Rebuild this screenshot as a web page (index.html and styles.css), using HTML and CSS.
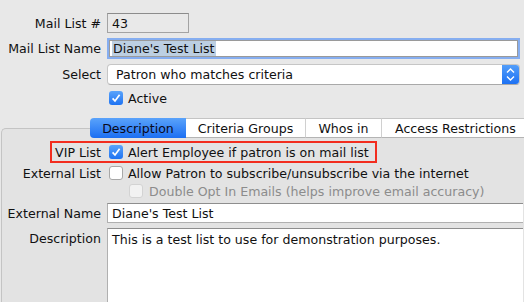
FILE: index.html
```html
<!DOCTYPE html>
<html lang="en">
<head>
    <meta charset="UTF-8">
    <meta name="viewport" content="width=device-width, initial-scale=1.0">
    <title>Mail List</title>
    <link rel="stylesheet" href="styles.css">
</head>
<body>
    <div class="form">
        <div class="row row-num">
            <span class="label">Mail List #</span>
            <div class="field field-ro">43</div>
        </div>
        <div class="row row-name">
            <span class="label">Mail List Name</span>
            <div class="field field-focus"><span class="selected">Diane's Test List</span></div>
        </div>
        <div class="row row-select">
            <span class="label">Select</span>
            <div class="select">
                <span class="select-text">Patron who matches criteria</span>
                <span class="stepper">
                    <svg width="17" height="21" viewBox="0 0 17 21">
                        <path d="M5 8.5 L8.5 5 L12 8.5" fill="none" stroke="#fff" stroke-width="1.4"/>
                        <path d="M5 12.5 L8.5 16 L12 12.5" fill="none" stroke="#fff" stroke-width="1.4"/>
                    </svg>
                </span>
            </div>
        </div>
        <div class="row row-active">
            <span class="label"></span>
            <span class="check checked">
                <svg width="14" height="14" viewBox="0 0 14 14"><path d="M3.6 7.4 L6 10 L10.6 3.8" fill="none" stroke="#fff" stroke-width="1.7"/></svg>
            </span>
            <span class="check-text">Active</span>
        </div>
    </div>

    <div class="tabs">
        <div class="tab tab-active">Description</div>
        <div class="tab">Criteria Groups</div>
        <div class="tab">Whos in</div>
        <div class="tab tab-last">Access Restrictions</div>
    </div>

    <div class="panel">
        <div class="callout">
            <span class="callout-label">VIP List</span>
            <span class="check checked">
                <svg width="14" height="14" viewBox="0 0 14 14"><path d="M3.6 7.4 L6 10 L10.6 3.8" fill="none" stroke="#fff" stroke-width="1.7"/></svg>
            </span>
            <span class="check-text">Alert Employee if patron is on mail list</span>
        </div>
        <div class="prow prow-ext">
            <span class="plabel">External List</span>
            <span class="check"></span>
            <span class="check-text">Allow Patron to subscribe/unsubscribe via the internet</span>
        </div>
        <div class="prow prow-opt">
            <span class="plabel"></span>
            <span class="check check-disabled"></span>
            <span class="check-text disabled">Double Opt In Emails (helps improve email accuracy)</span>
        </div>
        <div class="prow prow-extname">
            <span class="plabel plabel-field">External Name</span>
            <div class="pfield">Diane's Test List</div>
        </div>
        <div class="prow prow-desc">
            <span class="plabel plabel-field">Description</span>
            <div class="pfield textarea">This is a test list to use for demonstration purposes.</div>
        </div>
    </div>
</body>
</html>
```

FILE: styles.css
```css
body {
    margin: 0;
    width: 524px;
    height: 302px;
    overflow: hidden;
    background-color: #e8e8e8;
    font-family: "DejaVu Sans", "Liberation Sans", sans-serif;
    font-size: 12.6px;
    color: #111;
}
.form {
    padding-top: 13px;
}
.row {
    display: flex;
    align-items: center;
}
.label {
    box-sizing: border-box;
    width: 107px;
    padding-right: 6px;
    text-align: right;
    flex-shrink: 0;
    white-space: nowrap;
}
.row-num {
    height: 20px;
}
.row-name {
    height: 21px;
    margin-top: 5px;
}
.row-select {
    height: 21px;
    margin-top: 5px;
}
.row-active {
    height: 14px;
    margin-top: 6px;
}
.row-active .label {
    width: 109px;
}
.field {
    box-sizing: border-box;
    height: 100%;
    display: flex;
    align-items: center;
    padding-left: 4px;
}
.field-ro {
    width: 82px;
    background-color: #e9e9e9;
    border: 1px solid #a3a3a3;
    border-top-color: #8c8c8c;
}
.field-focus {
    width: 409px;
    background-color: #fff;
    border: 1px solid #9a9a9a;
    box-shadow: 0 0 0 2px #86aef0;
    height: 17px;
    margin-left: 2px;
    padding-left: 2px;
}
.selected {
    background-color: #bccfe2;
    padding: 0 1px;
}
.select {
    box-sizing: border-box;
    width: 413px;
    height: 21px;
    display: flex;
    align-items: center;
    background-color: #fff;
    border: 1px solid #c6c6c6;
    border-bottom-color: #a9a9a9;
    border-radius: 4px;
    overflow: hidden;
}
.select-text {
    flex: 1;
    padding-left: 8px;
}
.stepper {
    width: 17px;
    height: 21px;
    background: linear-gradient(#55a0fa, #1a6ff3);
    display: flex;
}
.check {
    box-sizing: border-box;
    width: 14px;
    height: 14px;
    border: 1px solid #a8a8a8;
    border-radius: 3px;
    background-color: #fff;
    flex-shrink: 0;
    display: flex;
}
.check.checked {
    border: none;
    background: linear-gradient(#5aa4fb, #1e73f2);
}
.check.check-disabled {
    border-color: #d3d3d3;
    background-color: #f2f2f2;
}
.check-text {
    margin-left: 5px;
    white-space: nowrap;
}
.check-text.disabled {
    color: #8c8c8c;
}
.tabs {
    display: flex;
    margin-top: 13px;
    margin-left: 90px;
    height: 20px;
    position: relative;
    z-index: 1;
    margin-bottom: -10px;
}
.tab {
    box-sizing: border-box;
    height: 20px;
    display: flex;
    align-items: center;
    justify-content: center;
    background-color: #fff;
    border-top: 1px solid #c4c4c4;
    border-bottom: 1px solid #b4b4b4;
    border-left: 1px solid #d0d0d0;
    white-space: nowrap;
}
.tab:nth-child(1) { width: 96px; }
.tab:nth-child(2) { width: 119px; }
.tab:nth-child(3) { width: 76px; }
.tab:nth-child(4) {
    width: 143px;
    justify-content: flex-start;
    padding-left: 13px;
}
.tab-active {
    background: linear-gradient(#5aa3fb, #1c6ff2);
    border: none;
    border-radius: 4px 0 0 4px;
    color: #0a0a1a;
}
.tab-active + .tab {
    border-left: none;
}
.panel {
    box-sizing: border-box;
    width: 523px;
    height: 174px;
    margin-left: 1px;
    background-color: #e3e3e3;
    border: 1px solid #c4c4c4;
    border-right: none;
    border-bottom: none;
    border-radius: 5px 0 0 0;
    padding-top: 12px;
}
.callout {
    box-sizing: border-box;
    display: flex;
    align-items: center;
    width: 327px;
    height: 22px;
    margin-left: 48px;
    border: 2px solid #f22d1f;
}
.callout-label {
    width: 49px;
    text-align: right;
    margin-right: 8px;
    flex-shrink: 0;
    white-space: nowrap;
}
.prow {
    display: flex;
    align-items: center;
}
.plabel {
    width: 99px;
    margin-right: 8px;
    text-align: right;
    flex-shrink: 0;
    white-space: nowrap;
}
.plabel-field {
    margin-right: 6px;
}
.prow-ext {
    height: 18px;
    margin-top: 1px;
}
.prow-opt {
    height: 16px;
    margin-top: 1px;
}
.prow-opt .plabel {
    width: 119px;
}
.prow-opt .check-text {
    margin-left: 6px;
}
.prow-extname {
    height: 20px;
    margin-top: 4px;
}
.pfield {
    box-sizing: border-box;
    width: 416px;
    height: 100%;
    background-color: #fff;
    border: 1px solid #b0b0b0;
    border-top-color: #8e8e8e;
    border-right: none;
    padding-left: 4px;
    display: flex;
    align-items: center;
    white-space: nowrap;
}
.prow-desc {
    margin-top: 5px;
    align-items: flex-start;
}
.prow-desc .plabel {
    padding-top: 3px;
}
.textarea {
    height: 74px;
    border-bottom: none;
    align-items: flex-start;
    padding-top: 3px;
}
```
